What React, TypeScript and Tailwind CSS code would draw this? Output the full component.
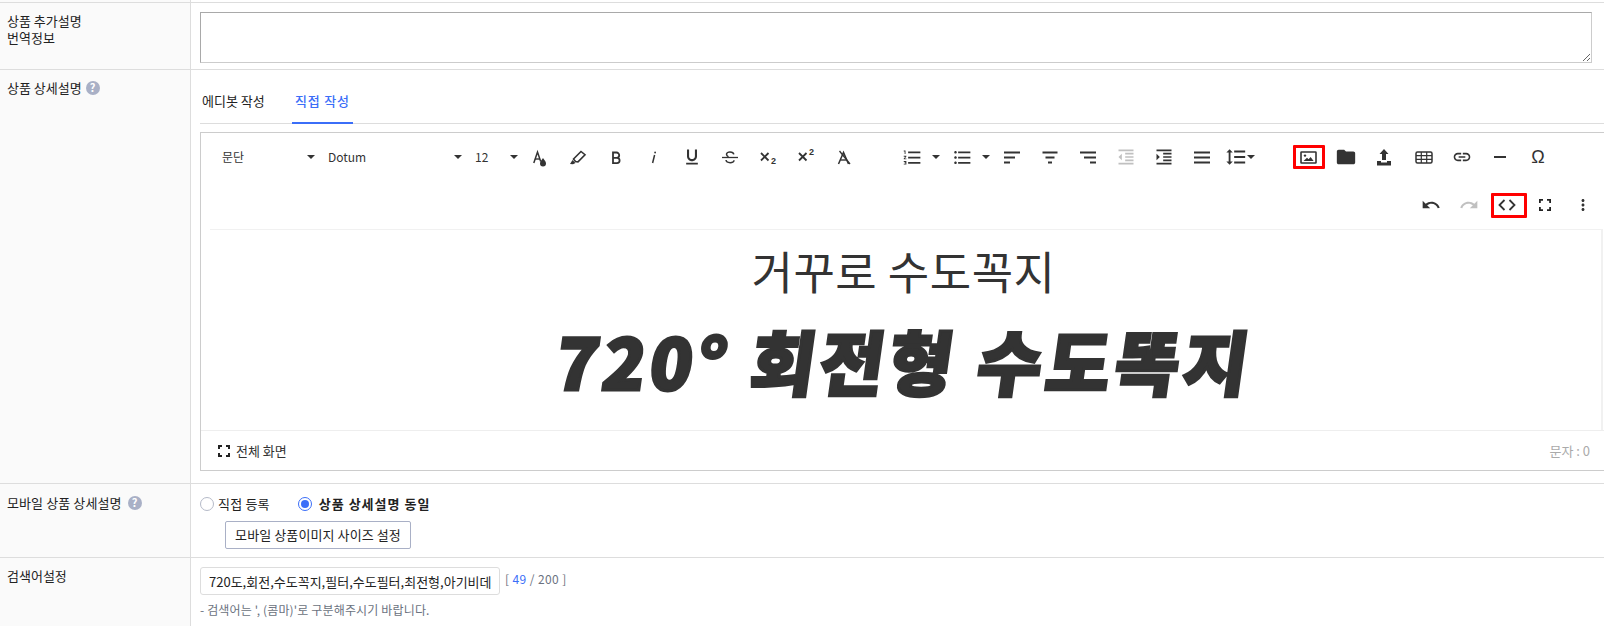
import React from "react";
import {
  MdFormatUnderlined,
  MdFormatListNumbered, MdFormatListBulleted, MdFormatIndentDecrease, MdFormatIndentIncrease,
  MdFormatLineSpacing, MdFolder, MdLink, MdUndo, MdRedo, MdMoreVert,
} from "react-icons/md";

const Caret = () => <span className="block w-0 h-0 border-x-[4.5px] border-x-transparent border-t-[4px] border-t-[#333]" />;

const Btn = ({ children, className = "" }: { children: React.ReactNode; className?: string }) => (
  <div className={"w-[38px] h-[48px] flex items-center justify-center text-[#333] shrink-0 " + className}>{children}</div>
);

const Svg = ({ children, w = 20, h = 20 }: { children: React.ReactNode; w?: number; h?: number }) => (
  <svg width={w} height={h} viewBox={`0 0 ${w} ${h}`} fill="#333">{children}</svg>
);

const TextColor = () => (
  <Svg>
    <path d="M3.800 16 7.500 5l3.200 9.500" fill="none" stroke="#333" strokeWidth="1.500" />
    <path d="M5 12h5" stroke="#333" strokeWidth="1.400" />
    <path d="M13 11c1.300 2.200 3 3.500 3 5.500a3 3 0 0 1-6 0c0-2 1.700-3.300 3-5.500z" />
  </Svg>
);
const Highlighter = () => (
  <Svg>
    <path d="M7.500 14.500 5.500 12l7.500-7.500 4 3.200-7 7.200z" fill="none" stroke="#333" strokeWidth="1.600" />
    <path d="M2 17l2.500-4 3 3-2.500 1.200z" />
  </Svg>
);
const Bold = () => (
  <Svg>
    <path d="M7 5.500h3.500a2.700 2.700 0 0 1 0 5.400H7zM7 10.900h4a2.600 2.600 0 0 1 0 5.200H7z" fill="none" stroke="#333" strokeWidth="1.800" />
  </Svg>
);
const Italic = () => (
  <Svg>
    <path d="M8.600 16l2-8" fill="none" stroke="#333" strokeWidth="1.500" />
    <circle cx="11.100" cy="5.500" r="0.900" />
  </Svg>
);
const Strike = () => (
  <Svg>
    <path d="M2 10.500h16" stroke="#333" strokeWidth="1.300" />
    <path d="M13.800 7.300C13.300 4.200 6.500 4.300 6.500 7.200c0 1.300.9 2 2 2.600M14 13.200c0 3.300-7.500 3.300-8-.2" fill="none" stroke="#333" strokeWidth="1.500" />
  </Svg>
);
const Clear = () => (
  <Svg>
    <path d="M4.500 17 9.500 5.500l5 11.500" fill="none" stroke="#333" strokeWidth="1.500" />
    <path d="M6.500 13h6" stroke="#333" strokeWidth="1.400" />
    <path d="M5.500 4 16 17" stroke="#333" strokeWidth="1.300" />
  </Svg>
);
const ScriptIcon = ({ sup }: { sup?: boolean }) => (
  <Svg>
    <path d="M3 6 10.500 13.500M10.500 6 3 13.500" stroke="#333" strokeWidth="1.800" />
    <text x="13" y={sup ? 7.5 : 17} fontSize="9" fontWeight="700" fill="#333" fontFamily="'Liberation Sans', sans-serif">2</text>
  </Svg>
);
const ImageIcon = () => (
  <Svg w={17} h={13}>
    <rect x="1" y="1" width="15" height="11" rx="0.500" fill="none" stroke="#333" strokeWidth="1.600" />
    <circle cx="5" cy="4.600" r="1.200" />
    <path d="M3.500 10 7 6.800l1.600 1.400L10.600 6l3 4z" />
  </Svg>
);
const UploadIcon = () => (
  <Svg w={16} h={17}>
    <path d="M8 0l4.500 5H10v6H6V5H3.500z" />
    <path d="M1 12h4v1.500h6V12h4v4.500H1z" />
  </Svg>
);
const TableIcon = () => (
  <Svg w={18} h={13}>
    <rect x="1" y="1" width="16" height="11" rx="1.500" fill="none" stroke="#333" strokeWidth="1.500" />
    <path d="M1 4.700h16M1 8.300h16M6.300 1v11M11.700 1v11" stroke="#333" strokeWidth="1.200" />
  </Svg>
);
const CodeIcon = () => (
  <Svg w={18} h={12}>
    <path d="M6.500 1 1.500 6l5 5M11.500 1l5 5-5 5" fill="none" stroke="#333" strokeWidth="1.800" />
  </Svg>
);
const Corners = ({ s = 13, t = 2 }: { s?: number; t?: number }) => {
  const a = t / 2;
  const b = s - a;
  const l = 4;
  return (
    <svg width={s} height={s} viewBox={`0 0 ${s} ${s}`} fill="none" stroke="#222" strokeWidth={t}>
      <path d={`M${a} ${l}V${a}H${l}M${s - l} ${a}H${b}V${l}M${b} ${s - l}V${b}H${s - l}M${l} ${b}H${a}V${s - l}`} />
    </svg>
  );
};
const Help = () => (
  <span className="inline-flex items-center justify-center w-[14px] h-[14px] rounded-full bg-[#a9b0c6] text-white text-[11px] font-bold leading-none">?</span>
);

const Row = ({ label, children, last }: { label: React.ReactNode; children: React.ReactNode; last?: boolean }) => (
  <div className={last ? "flex flex-1" : "flex border-b border-[#dddddd]"}>
    <div className="w-[191px] shrink-0 bg-[#fafafa] border-r border-[#dddddd] pl-[7px] pt-[9px] text-[13px] leading-[17px] text-[#222]">{label}</div>
    <div className="flex-1 min-w-0 pl-[9px]">{children}</div>
  </div>
);

export default function App() {
  const font = { fontFamily: "'Noto Sans CJK KR', 'Noto Sans', sans-serif" };
  return (
    <div className="flex flex-col w-[1604px] h-[626px] overflow-hidden bg-white text-[13px] text-[#222]" style={font}>
      <div className="flex h-[3px] shrink-0 border-b border-[#dddddd]">
        <div className="w-[191px] bg-[#fafafa] border-r border-[#dddddd]" />
      </div>

      <Row label={<>상품 추가설명<br />번역정보</>}>
        <div className="pt-[9px] pb-[6px]">
          <textarea className="block w-[1392px] h-[51px] border border-[#cccccc] border-t-[#a9a9a9] border-l-[#a9a9a9] outline-none resize-y" />
        </div>
      </Row>

      <Row label={<span className="inline-flex items-center gap-[4px]"><span>상품 상세설명</span><Help /></span>}>
        <div className="flex h-[54px] border-b border-[#dddddd]">
          <div className="pl-[2px] pt-[22px] w-[92px] leading-[18px]">에디봇 작성</div>
          <div className="relative w-[61px] h-[54px] pl-[3px] pt-[22px] leading-[18px] font-medium tracking-[0.8px] text-[#3b6ef8] border-b-2 border-[#3b6ef8]">직접 작성</div>
        </div>

        <div className="mt-[8px] mb-[12px] border-t border-l border-b border-[#cccccc]">
          <div className="flex items-center h-[48px] text-[#333]">
            <div className="w-[117px] flex items-center justify-between pl-[21px] pr-[3px] text-[12px]">문단<Caret /></div>
            <div className="w-[144px] flex items-center justify-between pl-[10px] text-[12px]">Dotum<Caret /></div>
            <div className="w-[56px] flex items-center justify-between pl-[13px] text-[12px]">12<Caret /></div>
            <div className="w-[3px]" />
            <Btn><TextColor /></Btn>
            <Btn><Highlighter /></Btn>
            <Btn><Bold /></Btn>
            <Btn><Italic /></Btn>
            <Btn><MdFormatUnderlined size={20} /></Btn>
            <Btn><Strike /></Btn>
            <Btn><ScriptIcon /></Btn>
            <Btn><ScriptIcon sup /></Btn>
            <Btn><Clear /></Btn>
            <div className="w-[30px]" />
            <Btn><MdFormatListNumbered size={21} /></Btn>
            <div className="w-[12px] pl-[1px]"><Caret /></div>
            <Btn><MdFormatListBulleted size={21} /></Btn>
            <div className="w-[12px] pl-[1px]"><Caret /></div>
            <Btn><Svg><rect x="2" y="4.500" width="16" height="2" /><rect x="2" y="9.500" width="11" height="2" /><rect x="2" y="14.500" width="6" height="2" /></Svg></Btn>
            <Btn><Svg><rect x="2.500" y="4.500" width="15" height="2" /><rect x="5.500" y="9.500" width="9" height="2" /><rect x="8" y="14.500" width="4" height="2" /></Svg></Btn>
            <Btn><Svg><rect x="2" y="4.500" width="16" height="2" /><rect x="6" y="9.500" width="12" height="2" /><rect x="12" y="14.500" width="6" height="2" /></Svg></Btn>
            <Btn className="opacity-30"><MdFormatIndentDecrease size={20} /></Btn>
            <Btn><MdFormatIndentIncrease size={20} /></Btn>
            <Btn><Svg><rect x="2" y="4.500" width="16" height="2" /><rect x="2" y="9.500" width="16" height="2" /><rect x="2" y="14.500" width="16" height="2" /></Svg></Btn>
            <div className="w-[4px]" />
            <div className="w-[22px] flex justify-center"><MdFormatLineSpacing size={22} /></div>
            <Caret />
            <div className="w-[34px]" />
            <Btn><div className="w-[32px] h-[24px] ml-[2px] pr-[2px] border-[3px] border-[#ff0000] rounded-[1px] flex items-center justify-center"><ImageIcon /></div></Btn>
            <Btn><MdFolder size={22} /></Btn>
            <Btn><UploadIcon /></Btn>
            <div className="w-[2px]" />
            <Btn><TableIcon /></Btn>
            <Btn><MdLink size={20} /></Btn>
            <Btn><div className="w-[12px] h-[2px] bg-[#333]" /></Btn>
            <Btn><span className="text-[18px] font-medium" style={{ fontFamily: "'Liberation Sans', sans-serif" }}>Ω</span></Btn>
          </div>

          <div className="flex items-center justify-end h-[48px] pr-[2px]">
            <Btn><MdUndo size={20} /></Btn>
            <Btn className="opacity-30"><MdRedo size={20} /></Btn>
            <Btn><div className="w-[36px] h-[25px] ml-[4px] pr-[4px] shrink-0 border-[3px] border-[#ff0000] rounded-[1px] flex items-center justify-center"><CodeIcon /></div></Btn>
            <Btn><Corners s={12} t={1.800} /></Btn>
            <Btn><MdMoreVert size={18} /></Btn>
          </div>

          <div className="ml-[9px] mr-[1px] h-[201px] border-t border-r-2 border-[#f1f1f1] flex flex-col items-center text-[#333]">
            <div className="mt-[9px] mr-[4px] text-[45px] leading-[64px] font-normal tracking-[0.5px] whitespace-nowrap">거꾸로 수도꼭지</div>
            <div className="mt-[12px] text-[70px] leading-[90px] font-black tracking-[4.300px] whitespace-nowrap -skew-x-[8deg] [-webkit-text-stroke:3px_#333]">720° 회전형 수도똑지</div>
          </div>

          <div className="h-[40px] border-t border-[#eeeeee] flex items-center justify-between pl-[17px] pr-[14px]">
            <div className="flex items-center gap-[6px] text-[#333]"><Corners s={12} t={2} /><span>전체 화면</span></div>
            <span className="text-[13px] text-[#aaaaaa]">문자 : 0</span>
          </div>
        </div>
      </Row>

      <Row label={<span className="inline-flex items-center gap-[6px] pt-[1px] tracking-[0.1px]"><span>모바일 상품 상세설명</span><Help /></span>}>
        <div className="pt-[11px] pb-[8px]">
          <div className="flex items-center h-[18px]">
            <span className="w-[14px] h-[14px] rounded-full border border-[#b5bac8] bg-white" />
            <span className="ml-[4px] tracking-[0.2px]">직접 등록</span>
            <span className="ml-[28px] w-[14px] h-[14px] rounded-full border border-[#3b6ef8] flex items-center justify-center">
              <span className="w-[8px] h-[8px] rounded-full bg-[#3b6ef8]" />
            </span>
            <span className="ml-[7px] font-bold tracking-[1px] text-[#222]">상품 상세설명 동일</span>
          </div>
          <button className="block ml-[25px] mt-[8px] w-[186px] h-[28px] border border-[#a9b0c6] rounded-[2px] bg-white text-[13px] tracking-[0.1px] text-[#222]">모바일 상품이미지 사이즈 설정</button>
        </div>
      </Row>

      <Row last label="검색어설정">
        <div className="pt-[9px]">
          <div className="flex items-start">
            <input readOnly value="720도,회전,수도꼭지,필터,수도필터,최전형,아기비데" className="w-[300px] h-[28px] border border-[#dddddd] rounded-[3px] pl-[8px] text-[13px] text-[#222] outline-none" />
            <span className="ml-[5px] pt-[3px] text-[12px] text-[#6b7280] tracking-[0.4px]">[ <span className="text-[#3b6ef8]">49</span> / 200 ]</span>
          </div>
          <div className="mt-[6px] text-[12px] text-[#6b7280] tracking-[0.15px] leading-[18px]">- 검색어는 ', (콤마)'로 구분해주시기 바랍니다.</div>
        </div>
      </Row>
    </div>
  );
}
